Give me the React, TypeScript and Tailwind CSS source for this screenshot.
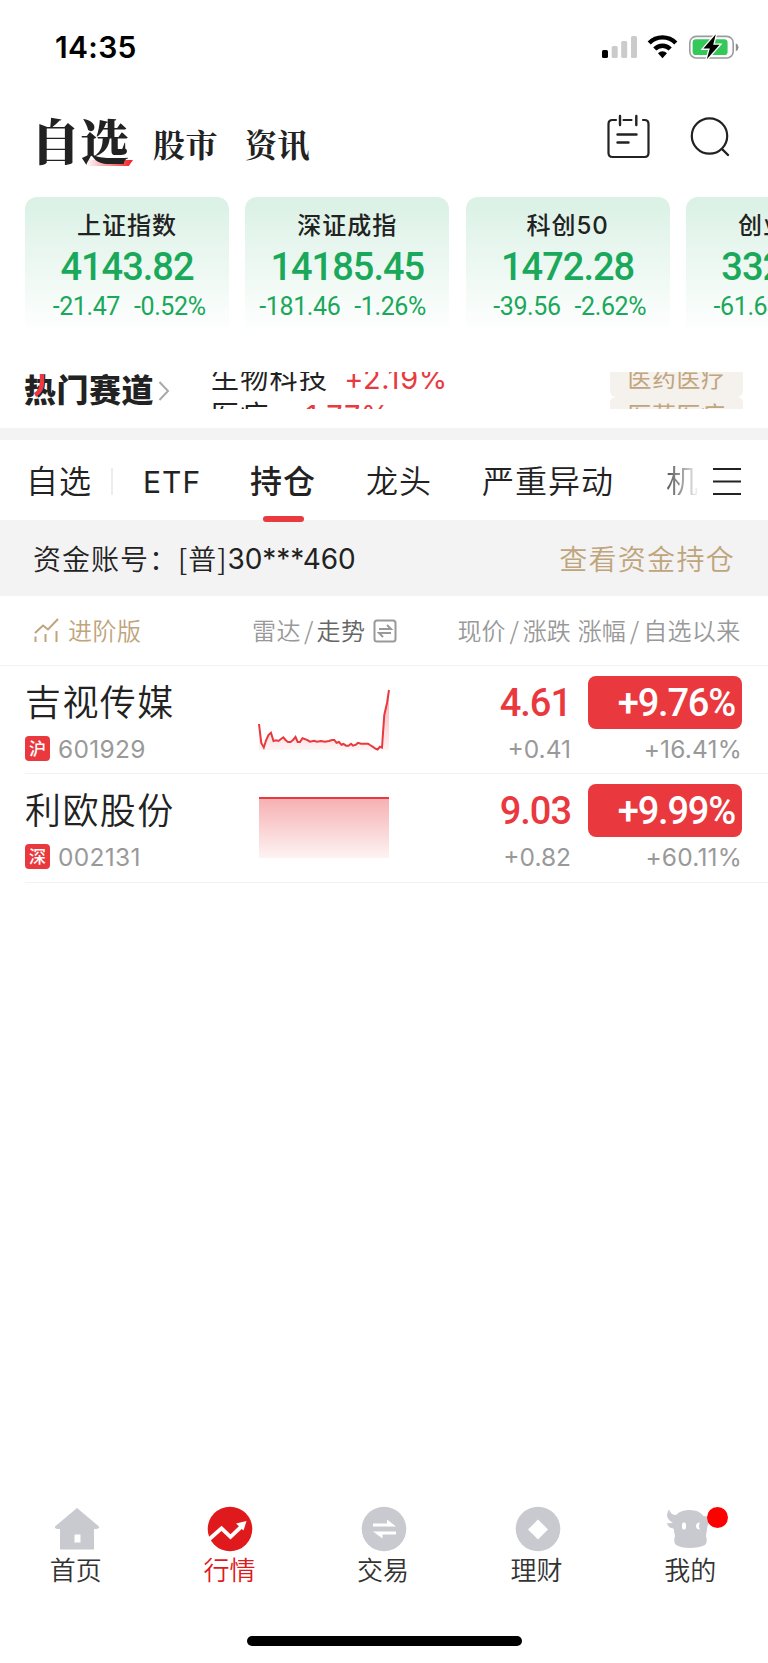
import React from "react";

interface IndexQuote {
  name: string;
  value: string;
  change: string;
  percent: string;
}

interface Holding {
  name: string;
  market: string;
  code: string;
  price: string;
  change: string;
  percent: string;
  since: string;
  line: string;
}

const indices: IndexQuote[] = [
  { name: "上证指数", value: "4143.82", change: "-21.47", percent: "-0.52%" },
  { name: "深证成指", value: "14185.45", change: "-181.46", percent: "-1.26%" },
  { name: "科创50", value: "1472.28", change: "-39.56", percent: "-2.62%" },
  { name: "创业板指", value: "3325.21", change: "-61.64", percent: "-1.82%" },
];

const holdings: Holding[] = [
  {
    name: "吉视传媒",
    market: "沪",
    code: "601929",
    price: "4.61",
    change: "+0.41",
    percent: "+9.76%",
    since: "+16.41%",
    line: "0,34 2.3,53 4.8,57.5 7,50.5 9.4,45 12,42.8 14.5,51 17,50.2 19.5,51 22,49 24.3,47.3 26.5,50 29,52 31.5,52 34,50 36.5,47 38.7,52 41,52 43.5,48.3 48,49.8 51,51.7 55,50.8 58,51.7 62,51 66,51.8 70,51 73,50 75.3,50 77.5,52.8 80,52 82.5,54.8 84.5,54 87,55.7 89.5,55.7 92,53.8 94,55.7 97,54.6 99,52.8 102,53.7 109,53.7 111,55 114,56.8 116,58.5 118.5,59.5 121,56.8 123,57.6 124,43 125.3,25 128,13 130,0",
  },
  {
    name: "利欧股份",
    market: "深",
    code: "002131",
    price: "9.03",
    change: "+0.82",
    percent: "+9.99%",
    since: "+60.11%",
    line: "0,0 130,0",
  },
];

const StatusBar = () => (
  <div className="flex h-[94px] items-center pl-[55px] pr-[29px]">
    <span className="font-['Inter'] text-[30px] font-semibold leading-[30px] tracking-[0.3px] text-black">
      14:35
    </span>
    <svg className="ml-auto" width="138" height="26" viewBox="0 0 138 26">
      <rect x="1" y="16" width="6" height="8" rx="1.6" fill="#000" />
      <rect x="10.7" y="12" width="6" height="12" rx="1.6" fill="#cbcbcb" />
      <rect x="20.2" y="7" width="6" height="17" rx="1.6" fill="#cbcbcb" />
      <rect x="30" y="2" width="6" height="22" rx="1.6" fill="#cbcbcb" />
      <g fill="none" stroke="#000" strokeWidth="4.4">
        <path d="M48.2 9a18.6 18.6 0 0 1 26.6 0" />
        <path d="M53.8 15a10.8 10.8 0 0 1 15.4 0" />
      </g>
      <path d="M57 19.2a6.4 6.4 0 0 1 9 0l-4.5 5z" fill="#000" />
      <rect x="88.8" y="2.4" width="43.4" height="21.6" rx="6.5" fill="none" stroke="#9b9b9b" strokeWidth="1.6" />
      <rect x="91.6" y="5.3" width="35" height="15.8" rx="3.4" fill="#34c759" />
      <path d="M134.8 9.3q2.7 1.2 2.7 4t-2.7 4z" fill="#8e8e8e" />
      <path d="M114.8 0.2 102.4 14.6h6.4l-3 10.6 12.8-14.4h-6.4z" fill="#000" stroke="#fff" strokeWidth="2.6" paintOrder="stroke" />
    </svg>
  </div>
);

const Header = () => (
  <header className="flex h-[103px] items-start pl-[31px] pr-[38px] font-['Noto_Serif_CJK_SC','Noto_Sans_CJK_SC',serif] text-[#222]">
    <div className="relative mt-[21px]">
      <div className="absolute left-[55px] top-[45px] h-[6px] w-[47px] bg-linear-to-r from-transparent to-[#f01e28] [clip-path:polygon(0_0,100%_0,91%_100%,0_100%)]" />
      <h1 className="relative text-[49px] font-black leading-[49px]">自选</h1>
    </div>
    <span className="ml-[24px] mt-[33px] text-[32px] font-bold leading-[32px] tracking-[0.5px]">股市</span>
    <span className="ml-[27px] mt-[33px] text-[32px] font-bold leading-[32px] tracking-[0.5px]">资讯</span>
    <svg className="ml-auto mt-[20px]" width="44" height="46" viewBox="0 0 44 46" fill="none" stroke="#222" strokeWidth="2.200" strokeLinecap="round">
      <path d="M10 6H6.500q-4 0-4 4v29q0 4 4 4h32q4 0 4-4V10q0-4-4-4H37M17.500 6h8" />
      <path d="M14 2v9M30.300 2v9M11.500 20.500h19M11.500 28.500h11" strokeWidth="2.400" />
    </svg>
    <svg className="ml-[39px] mt-[22px]" width="41" height="42" viewBox="0 0 41 42" fill="none" stroke="#222" strokeWidth="2.200" strokeLinecap="round">
      <circle cx="20.500" cy="20" r="17.700" />
      <path d="m33.500 33.500 5.500 5.500" strokeWidth="2.400" />
    </svg>
  </header>
);

const IndexCard: React.FC<{ quote: IndexQuote }> = ({ quote }) => (
  <div className="flex h-[138px] w-[204px] shrink-0 flex-col items-center rounded-xl bg-linear-to-b from-[#daf1e5] to-white">
    <div className="mt-[17px] whitespace-nowrap font-['Inter','Noto_Sans_CJK_SC',sans-serif] text-[24px] font-medium leading-[24px] tracking-[1px] text-[#222]">
      {quote.name}
    </div>
    <div className="mt-[10px] font-['Roboto'] text-[38px] font-medium leading-[38px] tracking-[-1px] text-[#1aa85a]">
      {quote.value}
    </div>
    <div className="mt-[8px] flex w-full gap-[14px] whitespace-nowrap font-['Roboto'] text-[25px] font-normal leading-[26px] tracking-[-0.4px] text-[#1aa85a]">
      <span className="w-[95px] text-right">{quote.change}</span>
      <span>{quote.percent}</span>
    </div>
  </div>
);

const TickerRow: React.FC<{ name: string; percent: string; tag: string }> = ({ name, percent, tag }) => (
  <div className="flex h-[37px] items-center">
    <span className="pb-[4px] text-[28px] leading-[28px] tracking-[1.300px] text-[#222]">{name}</span>
    <span className="ml-[16px] font-['Inter'] text-[29px] leading-[28px] tracking-[0.600px] text-[#e93a40]">{percent}</span>
    <span className="ml-auto flex h-[37px] w-[133px] items-center justify-center rounded-md bg-[#f5f1ec] pb-[4px] text-[24px] leading-[24px] tracking-[0.500px] text-[#c0a57f]">
      {tag}
    </span>
  </div>
);

const HotTrack = () => (
  <section className="flex h-[93px] pl-[24px] pr-[25px] pt-[37px] font-['Noto_Sans_CJK_SC',sans-serif]">
    <div className="relative -mt-px">
      <h2 className="text-[32px] font-black leading-[34px] tracking-[0.500px] text-[#222]">热门赛道</h2>
      <svg className="absolute left-[10px] top-[3px]" width="12" height="24" viewBox="0 0 12 24" fill="none">
        <path d="M8 0v8q0 9-7 13" stroke="#e93a40" strokeWidth="4.500" />
      </svg>
    </div>
    <svg className="ml-[4px] mt-[9px]" width="12" height="20" viewBox="0 0 12 20" fill="none" stroke="#aaa" strokeWidth="2">
      <path d="m1.500 1 8.500 9-8.500 9" />
    </svg>
    <div className="ml-[41px] h-[37px] w-[532px] shrink-0 overflow-hidden">
      <div className="-mt-[12px]">
        <TickerRow name="生物科技" percent="+2.19%" tag="医药医疗" />
        <TickerRow name="医疗" percent="+1.77%" tag="医药医疗" />
      </div>
    </div>
  </section>
);

const GroupTabs = () => (
  <nav className="flex h-[80px] items-start whitespace-nowrap pl-[26px] pt-[23px] font-['Noto_Sans_CJK_SC',sans-serif] text-[32px] font-[350] leading-[32px] tracking-[1px] text-[#222]">
    <span className="w-[85px]">自选</span>
    <span className="mt-[5px] h-[27px] w-[2px] bg-[#ededed]" />
    <span className="ml-[30px] mt-[3px] w-[107px] font-['Inter'] text-[30px] font-normal">ETF</span>
    <span className="relative w-[116px]">
      <b className="font-medium">持仓</b>
      <i className="absolute left-[13px] top-[53px] h-[6px] w-[41px] rounded-full bg-[#e93a40]" />
    </span>
    <span className="w-[116px]">龙头</span>
    <span className="w-[184px]">严重异动</span>
    <span className="w-[32px] overflow-hidden bg-linear-to-r from-[#555] to-[#f4f4f4] bg-clip-text text-transparent">机</span>
    <svg className="ml-[15px] mt-[4px]" width="28" height="30" viewBox="0 0 28 30" stroke="#222" strokeWidth="2">
      <path d="M0 2h28M0 14.500h28M0 27h28" />
    </svg>
  </nav>
);

const AccountBar = () => (
  <div className="flex h-[76px] items-center justify-between bg-[#f3f3f3] pl-[33px] pr-[33px] font-['Noto_Sans_CJK_SC',sans-serif] text-[28px] font-[350] leading-[32px] text-[#222]">
    <div className="flex items-center whitespace-nowrap tracking-[1px]">
      <span>资金账号：</span>
      <span>[普]</span>
      <span className="mt-[2px] font-['Inter'] font-normal tracking-[-0.100px]">30***460</span>
    </div>
    <span className="tracking-[1.300px] text-[#bfa47c]">查看资金持仓</span>
  </div>
);

const ColumnHeader = () => (
  <div className="flex h-[70px] items-center whitespace-nowrap border-b border-[#f2f2f2] pb-[2px] pl-[34px] font-['Noto_Sans_CJK_SC',sans-serif] text-[24px] font-[350] leading-[24px] text-[#999]">
    <svg className="mt-[1px]" width="25" height="24" viewBox="0 0 25 24" fill="none" stroke="#bfa47c" strokeWidth="2">
      <path d="M1 15 9 7.500l5 4L24 1" />
      <path d="M1.500 18.500V24M11.500 16v8M22.500 13v11" />
    </svg>
    <span className="ml-[9px] w-[184px] tracking-[0.500px] text-[#bfa47c]">进阶版</span>
    <span className="tracking-[0.500px]">雷达</span>
    <span className="mx-[3px]">/</span>
    <span className="tracking-[0.500px] text-[#666]">走势</span>
    <svg className="ml-[8px] mt-[2px]" width="24" height="24" viewBox="0 0 24 24" fill="none" stroke="#999" strokeWidth="2">
      <rect x="1.500" y="1.500" width="21" height="21" rx="2.500" />
      <path d="M6 10h12l-4-4M18 14H6l4 4" />
    </svg>
    <span className="ml-[60px]">现价</span>
    <span className="mx-[4px]">/</span>
    <span>涨跌</span>
    <span className="ml-[7px]">涨幅</span>
    <span className="mx-[4px]">/</span>
    <span className="tracking-[0.300px]">自选以来</span>
  </div>
);

const HoldingRow: React.FC<{ item: Holding }> = ({ item }) => (
  <div className="ml-[25px] flex h-[108.400px] border-b border-[#f2f2f2]">
    <div className="w-[233px]">
      <div className="mt-[16px] font-['Noto_Sans_CJK_SC',sans-serif] text-[36px] font-[350] leading-[36px] tracking-[1.400px] text-[#222]">
        {item.name}
      </div>
      <div className="mt-[18px] flex items-center">
        <span className="flex h-[25px] w-[25px] items-center justify-center rounded bg-[#e9393f] pb-[2px] font-['Noto_Sans_CJK_SC',sans-serif] text-[17px] font-medium leading-[17px] text-white">
          {item.market}
        </span>
        <span className="ml-[8px] font-['Inter'] text-[24.500px] leading-[24px] tracking-[0.300px] text-[#999]">{item.code}</span>
      </div>
    </div>
    <svg className="mt-[23px] overflow-visible" width="132" height="62" viewBox="-1 -1 132 62">
      <defs>
        <linearGradient id={`trend-${item.code}`} x1="0" y1="0" x2="0" y2="60" gradientUnits="userSpaceOnUse">
          <stop offset="0" stopColor="#e9393f" stopOpacity="0.4" />
          <stop offset="1" stopColor="#e9393f" stopOpacity="0.06" />
        </linearGradient>
      </defs>
      <polygon points={`0,60 ${item.line} 130,60`} fill={`url(#trend-${item.code})`} />
      <polyline points={item.line} fill="none" stroke="#e9393f" strokeWidth="2" />
    </svg>
    <div className="flex w-[181px] flex-col items-end">
      <div className="mt-[18px] font-['Roboto'] text-[38px] font-medium leading-[38px] tracking-[-1px] text-[#e9393f]">
        {item.price}
      </div>
      <div className="mt-[15px] font-['Inter'] text-[24.500px] leading-[24px] text-[#999]">{item.change}</div>
    </div>
    <div className="ml-[17px] w-[154px] text-right">
      <div className="mt-[10px] h-[53px] rounded-lg bg-[#e9393f] pr-[7px] pt-px font-['Roboto'] text-[38px] font-medium leading-[53px] tracking-[-1.200px] text-white">
        {item.percent}
      </div>
      <div className="mt-[8px] font-['Inter'] text-[24.500px] leading-[24px] tracking-[0.200px] text-[#999]">{item.since}</div>
    </div>
  </div>
);

const HomeIcon = () => (
  <svg width="46" height="46" viewBox="0 0 46 46" fill="#c9cad0">
    <path d="M23 2 45 20.500q.5 2.500-3 2.500h-2v20.500H6V23H4q-3.500 0-3-2.500z" />
    <path d="M20.500 28.500h6v8h-6z" fill="#fff" />
  </svg>
);

const MarketIcon = () => (
  <svg width="46" height="46" viewBox="0 0 46 46">
    <circle cx="23" cy="23" r="22.300" fill="#e0191c" />
    <path d="M2.500 33 14.500 22.300l9 8.600L35 20" fill="none" stroke="#fff" strokeWidth="3.800" />
    <path d="m29 17.500 10.500-2.500-3 9.500z" fill="#fff" />
  </svg>
);

const TradeIcon = () => (
  <svg width="46" height="46" viewBox="0 0 46 46">
    <circle cx="23" cy="23" r="22.300" fill="#c9cad0" />
    <path d="M12 17.500h14v-4l9 7H12zM35 28.500H21.500v4l-9.500-7h23z" fill="#fff" />
  </svg>
);

const WealthIcon = () => (
  <svg width="46" height="46" viewBox="0 0 46 46">
    <circle cx="23" cy="23" r="22.300" fill="#c9cad0" />
    <path d="m23 13.500 10 10-10 10-10-10z" fill="#fff" />
  </svg>
);

const MineIcon = () => (
  <svg width="46" height="46" viewBox="0 0 46 46" fill="#c9cad0">
    <path d="M2 3.500Q-1 8 .5 11.500q2 4 5.500 5Q3 17.500 0 17q1 5 6.500 5.500L8 30q-2 6 1 9 5 3 14 3t15-3q3-3 1-9l1.500-10 4-9-8-1q-4-6-13.500-6T9 9q-5 0-7-5.500z" />
    <rect x="15" y="16.500" width="4" height="7" rx="1.700" fill="#fff" />
    <path d="M33 16.500q-4 0-4 3.500t4 3.500q-2-3.500 0-7z" fill="#fff" />
  </svg>
);

const navItems = [
  { label: "首页", icon: HomeIcon },
  { label: "行情", icon: MarketIcon, active: true },
  { label: "交易", icon: TradeIcon },
  { label: "理财", icon: WealthIcon },
  { label: "我的", icon: MineIcon, dot: true },
];

const BottomNav = () => (
  <nav className="grid grid-cols-5 font-['Noto_Sans_CJK_SC',sans-serif]">
    {navItems.map(({ label, icon: Icon, active, dot }) => (
      <div key={label} className="flex flex-col items-center">
        <div className={dot ? "relative mr-[2px]" : "relative"}>
          <Icon />
          {dot && <span className="absolute -right-[15px] top-[1px] h-[21px] w-[21px] rounded-full bg-[#ff0000]" />}
        </div>
        <span className={`mr-[2px] mt-[4px] text-[26px] font-[350] leading-[26px] ${active ? "text-[#e0191c]" : "text-[#333]"}`}>
          {label}
        </span>
      </div>
    ))}
  </nav>
);

export default function App() {
  return (
    <div className="flex h-[1663px] w-[768px] flex-col overflow-hidden bg-white">
      <StatusBar />
      <Header />
      <div className="flex gap-[16.300px] overflow-hidden pl-[25px]">
        {indices.map((quote) => (
          <IndexCard key={quote.name} quote={quote} />
        ))}
      </div>
      <HotTrack />
      <div className="h-[12px] bg-[#f3f3f3]" />
      <div className="relative z-10">
        <GroupTabs />
      </div>
      <AccountBar />
      <ColumnHeader />
      {holdings.map((item) => (
        <HoldingRow key={item.code} item={item} />
      ))}
      <div className="mt-auto">
        <BottomNav />
        <div className="mx-auto mb-[17px] mt-[54px] h-[10px] w-[275px] rounded-full bg-black" />
      </div>
    </div>
  );
}
